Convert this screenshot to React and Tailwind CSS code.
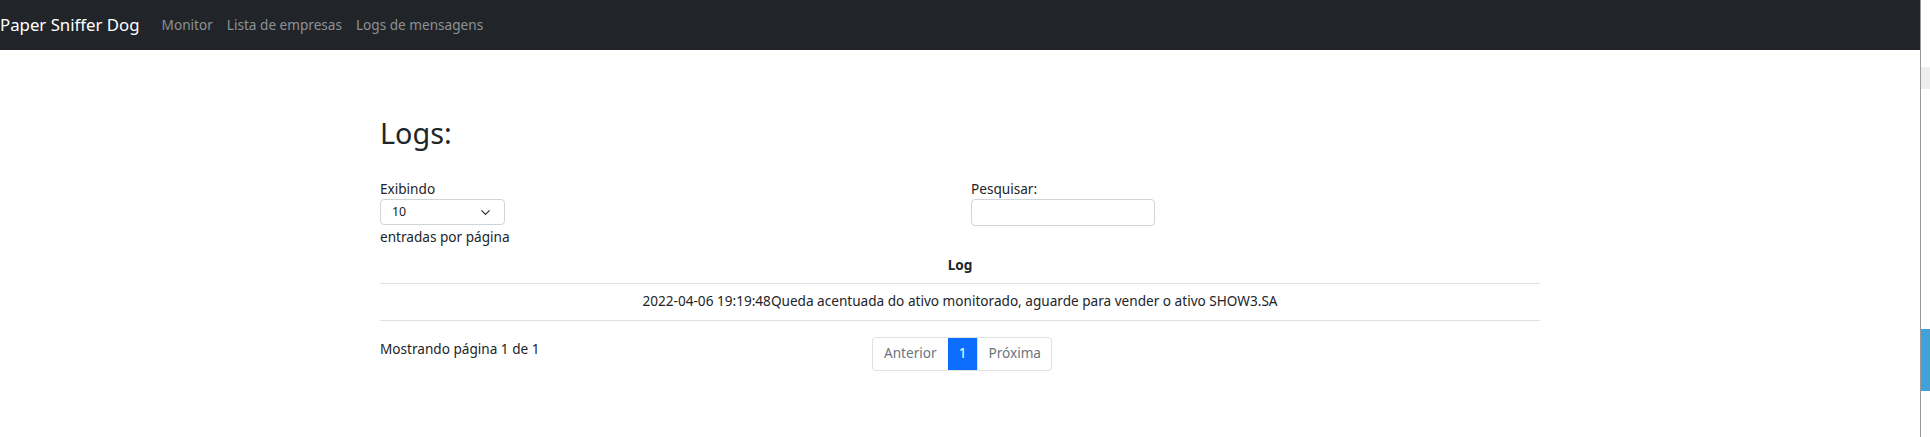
import { ChevronDown } from "lucide-react";

const font = { fontFamily: '"Noto Sans", "Open Sans", sans-serif' };

function Navbar() {
  return (
    <nav className="h-[50px] bg-[#212529] flex items-center">
      <span className="text-white text-[16.8px] mr-[22px]">Paper Sniffer Dog</span>
      <div className="flex gap-[14px] text-[13.6px] text-[#8e9194]">
        <a>Monitor</a>
        <a>Lista de empresas</a>
        <a>Logs de mensagens</a>
      </div>
    </nav>
  );
}

function Pagination() {
  return (
    <div className="flex h-[34px] text-[13.6px] text-[#6c757d] border border-[#dee2e6] rounded-[4px] overflow-hidden">
      <span className="w-[75px] flex items-center justify-center">Anterior</span>
      <span className="w-[30px] flex items-center justify-center bg-[#0d6efd] text-white">1</span>
      <span className="flex-1 px-[10px] flex items-center justify-center border-l border-[#dee2e6]">Próxima</span>
    </div>
  );
}

export default function App() {
  return (
    <div className="flex w-[1930px] h-[437px] bg-white text-[#212529]" style={font}>
      <div className="w-[1920px]">
        <Navbar />

        <main className="w-[1160px] ml-[380px] pt-[66px]">
          <h2 className="text-[28.8px] leading-[34px] mb-[29px]">Logs:</h2>

          <div className="flex text-[13.6px] leading-[20px]">
            <div className="w-[591px]">
              <label className="block">Exibindo</label>
              <div className="w-[125px] h-[26px] border border-[#ced4da] rounded-[4px] flex items-center justify-between pl-[11px] pr-[11px] text-[12.4px]">
                <span>10</span>
                <ChevronDown size={15} strokeWidth={1.75} />
              </div>
              <span className="block mt-[2px]">entradas por página</span>
            </div>
            <div>
              <label className="block">Pesquisar:</label>
              <div className="w-[184px] h-[27px] border border-[#ced4da] rounded-[4px]" />
            </div>
          </div>

          <table className="w-full text-[13.6px]">
            <thead>
              <tr className="border-b border-[#dee2e6]">
                <th className="h-[36px] font-bold">Log</th>
              </tr>
            </thead>
            <tbody>
              <tr className="border-b border-[#dee2e6]">
                <td className="h-[37px] text-center">
                  2022-04-06 19:19:48Queda acentuada do ativo monitorado, aguarde para vender o ativo SHOW3.SA
                </td>
              </tr>
            </tbody>
          </table>

          <div className="flex mt-[16px] text-[13.6px]">
            <div className="w-[492px] pt-[2px]">Mostrando página 1 de 1</div>
            <div className="w-[180px]">
              <Pagination />
            </div>
          </div>
        </main>
      </div>

      <div className="w-[10px] border-l border-[#9a9a9a] flex flex-col">
        <div className="h-[67px]" />
        <div className="h-[22px] bg-[#eeeeee]" />
        <div className="h-[240px]" />
        <div className="h-[62px] bg-[#42a0db]" />
      </div>
    </div>
  );
}
